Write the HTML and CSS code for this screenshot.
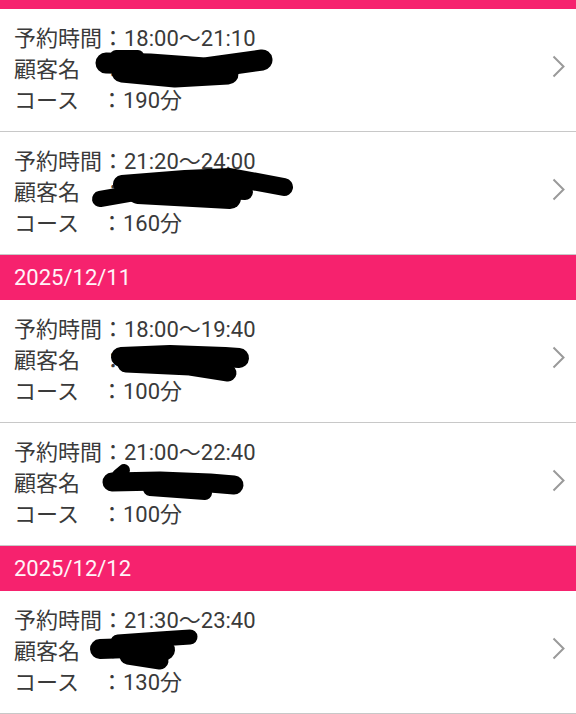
FILE: index.html
```html
<!DOCTYPE html>
<html>
<head>
<title>予約一覧</title>
<link rel="stylesheet" href="styles.css">
</head>
<body>
<div class="list">
  <div class="dateHeader scrolled"></div>

  <div class="item">
    <div class="info">
      <div>予約時間：18:00～21:10</div>
      <div>顧客名　：</div>
      <div>コース　：190分</div>
    </div>
    <svg class="chevron" viewBox="0 0 13 23"><path d="M1.5 1.5 L11.5 11.5 L1.5 21.5" /></svg>
    <svg class="scribble" viewBox="0 0 576 122">
      <path d="M106 54 L150 55 L205 59 L262 51" stroke-width="21" />
      <path d="M122 63 L175 68 L228 65" stroke-width="21" />
      <path d="M116 47 L138 47" stroke-width="12" />
    </svg>
  </div>

  <div class="item">
    <div class="info">
      <div>予約時間：21:20～24:00</div>
      <div>顧客名　：</div>
      <div>コース　：160分</div>
    </div>
    <svg class="chevron" viewBox="0 0 13 23"><path d="M1.5 1.5 L11.5 11.5 L1.5 21.5" /></svg>
    <svg class="scribble" viewBox="0 0 576 122">
      <path d="M100 67 L140 60 L200 58 L245 60" stroke-width="16" />
      <path d="M122 52 L185 47 L230 45 L284 55" stroke-width="18" />
      <path d="M138 61 L230 66" stroke-width="22" />
    </svg>
  </div>

  <div class="dateHeader">2025/12/11</div>

  <div class="item">
    <div class="info">
      <div>予約時間：18:00～19:40</div>
      <div>顧客名　：</div>
      <div>コース　：100分</div>
    </div>
    <svg class="chevron" viewBox="0 0 13 23"><path d="M1.5 1.5 L11.5 11.5 L1.5 21.5" /></svg>
    <svg class="scribble" viewBox="0 0 576 122">
      <path d="M121 57 L170 55 L225 57 L239 58" stroke-width="20" />
      <path d="M126 64 L190 67 L228 73" stroke-width="17" />
    </svg>
  </div>

  <div class="item">
    <div class="info">
      <div>予約時間：21:00～22:40</div>
      <div>顧客名　：</div>
      <div>コース　：100分</div>
    </div>
    <svg class="chevron" viewBox="0 0 13 23"><path d="M1.5 1.5 L11.5 11.5 L1.5 21.5" /></svg>
    <svg class="scribble" viewBox="0 0 576 122">
      <path d="M112 59 L160 58 L210 60 L234 62" stroke-width="19" />
      <path d="M118 52 L124 47" stroke-width="12" />
      <path d="M150 66 L205 70" stroke-width="14" />
    </svg>
  </div>

  <div class="dateHeader">2025/12/12</div>

  <div class="item">
    <div class="info">
      <div>予約時間：21:30～23:40</div>
      <div>顧客名　：</div>
      <div>コース　：130分</div>
    </div>
    <svg class="chevron" viewBox="0 0 13 23"><path d="M1.5 1.5 L11.5 11.5 L1.5 21.5" /></svg>
    <svg class="scribble" viewBox="0 0 576 122">
      <path d="M100 58 L130 57 L165 59" stroke-width="20" />
      <path d="M118 51 L160 48 L190 46" stroke-width="15" />
      <path d="M128 65 L160 70" stroke-width="17" />
    </svg>
  </div>
</div>
</body>
</html>
```

FILE: styles.css
```css
body {
  margin: 0;
  background-color: #ffffff;
  font-family: "Roboto", "Noto Sans CJK JP", sans-serif;
  color: #3a3a3a;
  overflow: hidden;
}

.dateHeader {
  height: 45px;
  line-height: 45px;
  padding-left: 14px;
  background-color: #f6226e;
  color: #fff4f8;
  font-size: 22px;
}

.dateHeader.scrolled {
  height: 9px;
}

.item {
  position: relative;
  display: flex;
  align-items: center;
  height: 122px;
  padding: 0 11px 0 14px;
  border-bottom: 1px solid #c8c8c8;
}

.info {
  flex: 1;
  font-size: 22px;
  line-height: 31px;
  padding-bottom: 2px;
}

.chevron {
  width: 13px;
  height: 23px;
  margin-top: -8px;
}

.chevron path {
  fill: none;
  stroke: #9a9a9a;
  stroke-width: 2;
}

.scribble {
  position: absolute;
  left: 0;
  top: 0;
  width: 576px;
  height: 122px;
}

.scribble path {
  fill: none;
  stroke: #000000;
  stroke-linecap: round;
  stroke-linejoin: round;
}
```
